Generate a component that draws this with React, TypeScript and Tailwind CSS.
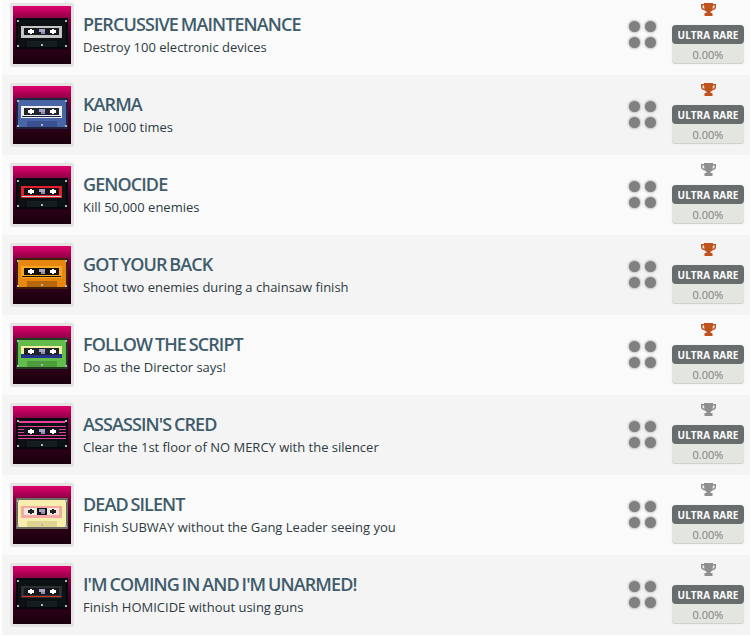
type Tape = {
  frame: string;
  body: string;
  label: string;
  window: string;
  lower: string;
  stripes?: string;
  line?: string;
  band?: string;
  hub?: string;
  center?: string;
};

const black = { frame: "#05090b", body: "#0c1214", lower: "#141c1e" };

const rows: { title: string; desc: string; trophy: string; tape: Tape }[] = [
  { title: "PERCUSSIVE MAINTENANCE", desc: "Destroy 100 electronic devices", trophy: "#c1521f", tape: { ...black, label: "#c4c4c4", window: "#16181c" } },
  { title: "KARMA", desc: "Die 1000 times", trophy: "#c1521f", tape: { frame: "#1c2240", body: "#4a65a5", lower: "#3a5090", label: "#eef0f5", window: "#23262e", line: "#1c2240" } },
  { title: "GENOCIDE", desc: "Kill 50,000 enemies", trophy: "#8f8f8f", tape: { ...black, label: "#e3202a", window: "#141418", line: "#c9c9c9" } },
  { title: "GOT YOUR BACK", desc: "Shoot two enemies during a chainsaw finish", trophy: "#c1521f", tape: { frame: "#3d1c08", body: "#e8870f", lower: "#b8660a", label: "#f7a823", window: "#1a120a", line: "#1a120a" } },
  { title: "FOLLOW THE SCRIPT", desc: "Do as the Director says!", trophy: "#c1521f", tape: { frame: "#1c3a1e", body: "#62bb4a", lower: "#4c9c3c", label: "#f3eea0", window: "#20242c", band: "#24348c" } },
  { title: "ASSASSIN'S CRED", desc: "Clear the 1st floor of NO MERCY with the silencer", trophy: "#8f8f8f", tape: { ...black, label: "#0c1214", window: "#14141a", stripes: "#e8409c" } },
  { title: "DEAD SILENT", desc: "Finish SUBWAY without the Gang Leader seeing you", trophy: "#8f8f8f", tape: { frame: "#6c6c60", body: "#f5eeac", lower: "#ded690", label: "#f6a9a4", window: "#f0e8d8", hub: "#222228", center: "#14141a" } },
  { title: "I'M COMING IN AND I'M UNARMED!", desc: "Finish HOMICIDE without using guns", trophy: "#8f8f8f", tape: { ...black, label: "#2c3033", window: "#16181c", line: "#d8301f" } },
];

function Cassette({ tape }: { tape: Tape }) {
  const screws = [[1, 2], [49, 2], [1, 27], [49, 27], [25, 26]];
  const hub = tape.hub ?? "#fff";
  return (
    <svg width="52" height="31" viewBox="0 0 52 31" shapeRendering="crispEdges" className="block">
      <rect width="52" height="31" fill={tape.frame} />
      <rect x="2" y="2" width="48" height="27" fill={tape.body} />
      {tape.stripes && (
        <>
          <rect x="3" y="3" width="46" height="2" fill={tape.stripes} />
          <rect x="2" y="8" width="48" height="1" fill={tape.stripes} />
          <rect x="2" y="11" width="48" height="1" fill={tape.stripes} />
          <rect x="2" y="14" width="48" height="1" fill={tape.stripes} />
          <rect x="2" y="17" width="48" height="1" fill={tape.stripes} />
          <rect x="2" y="20" width="48" height="1" fill={tape.stripes} />
        </>
      )}
      {!tape.stripes && <rect x="5" y="8" width="41" height="12" fill={tape.label} />}
      {tape.band && <rect x="5" y="16" width="41" height="4" fill={tape.band} />}
      <rect x="8" y="10" width="35" height="7" fill={tape.window} />
      {tape.center && <rect x="21" y="10" width="10" height="7" fill={tape.center} />}
      {tape.line && <rect x="6" y="18" width="39" height="1" fill={tape.line} />}
      <rect x="14" y="11" width="2" height="5" fill={hub} />
      <rect x="12" y="12" width="6" height="3" fill={hub} />
      <rect x="36" y="11" width="2" height="5" fill={hub} />
      <rect x="34" y="12" width="6" height="3" fill={hub} />
      <rect x="23" y="11" width="6" height="3" fill="#a7a3c4" />
      <rect x="25" y="14" width="4" height="2" fill="#8f8bb0" />
      <rect x="11" y="23" width="30" height="6" fill={tape.lower} />
      {screws.map(([x, y]) => (
        <rect key={`${x}-${y}`} x={x} y={y} width="2" height="2" fill="#b5b5b5" />
      ))}
    </svg>
  );
}

function Trophy({ color }: { color: string }) {
  return (
    <svg width="15" height="13" viewBox="0 0 15 13" className="block">
      <path
        fill={color}
        fillRule="evenodd"
        d="M3 0h9v1h3v3c0 1.800-1.500 3-3.500 3.300-.6.8-1.300 1.300-2 1.500V10h2v3H3.500v-3h2V8.800c-.7-.2-1.400-.7-2-1.500C1.500 7 0 5.800 0 4V1h3V0zM1.500 2.500V4c0 .8.700 1.500 2 1.800-.3-1-.4-2.200-.5-3.300H1.500zM13.500 2.500H12c-.1 1.100-.2 2.300-.5 3.300 1.300-.3 2-1 2-1.800V2.500z"
      />
    </svg>
  );
}

function Dots() {
  return (
    <div className="grid grid-cols-2 gap-[5px] w-[27px] mb-[2px]">
      {[0, 1, 2, 3].map((i) => (
        <div key={i} className="w-[11px] h-[11px] rounded-full bg-[#808080] shadow-[0_0_3px_#808080]" />
      ))}
    </div>
  );
}

export default function App() {
  return (
    <div className="w-[750px] h-[636px] overflow-hidden bg-white font-['Open_Sans',sans-serif]">
      <div className="-mt-[5px] ml-[2px]">
        {rows.map((r, i) => (
          <div key={r.title} className={`h-[80px] flex items-center pl-[8px] ${i % 2 === 0 ? "bg-[#fafafa]" : "bg-[#f4f4f4]"}`}>
            <div className="w-[64px] h-[64px] shrink-0 rounded-[2px] bg-[#e5e4e2] p-[3px]">
              <div className="w-[58px] h-[58px] pb-[4px] bg-[linear-gradient(to_bottom,#e0006c_0%,#c4005e_8%,#7a0040_25%,#45002a_50%,#2a0016_75%,#1a000c_100%)] flex items-center justify-center">
                <Cassette tape={r.tape} />
              </div>
            </div>
            <div className="ml-[9px] flex-1 min-w-0 pb-[2px]">
              <div className="text-[18px] leading-[24px] font-semibold tracking-[-0.9px] [word-spacing:-1px] text-[#3e5c6b]">{r.title}</div>
              <div className="text-[13px] leading-[20px] mt-[1px] text-[#2d3a42]">{r.desc}</div>
            </div>
            <Dots />
            <div className="w-[72px] ml-[16px] mr-[6px] pb-[3px] flex flex-col items-center">
              <Trophy color={r.trophy} />
              <div className="w-[72px] mt-[9px] rounded-[4px] bg-[#e3e5df] border-b border-[#d0d2cc] shadow-[0_0_1px_#c8c8c8]">
                <div className="h-[19px] rounded-[4px] bg-[#676c6d] text-white text-[10px] leading-[20px] font-bold text-center">ULTRA RARE</div>
                <div className="h-[19px] text-[#7d7f81] text-[11px] leading-[21px] text-center">0.00%</div>
              </div>
            </div>
          </div>
        ))}
      </div>
    </div>
  );
}
